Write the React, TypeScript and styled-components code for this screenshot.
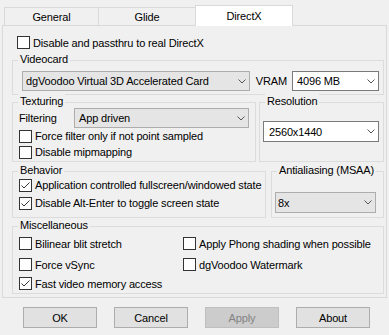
import React from 'react';
import styled, { createGlobalStyle } from 'styled-components';

const GlobalStyle = createGlobalStyle`
  html, body { margin: 0; padding: 0; background: #f0f0f0; }
  body {
    font-family: "Liberation Sans", Arial, sans-serif;
    font-size: 11px;
    letter-spacing: -0.15px;
    color: #000;
  }
  * { box-sizing: border-box; }
`;

const Dialog = styled.div`
  width: 389px;
  height: 335px;
  padding: 0 2px;
  background: #f0f0f0;
  display: flex;
  flex-direction: column;
`;

const TabBar = styled.div`
  display: flex;
  align-items: flex-end;
  height: 25px;
  padding-left: 2px;
`;

const Tab = styled.div<{ $active?: boolean; $w: number; $first?: boolean }>`
  position: relative;
  z-index: ${(p) => (p.$active ? 1 : 0)};
  width: ${(p) => p.$w}px;
  height: ${(p) => (p.$active ? 21 : 18)}px;
  margin-left: ${(p) => (p.$first ? 0 : -1)}px;
  margin-bottom: ${(p) => (p.$active ? -1 : 0)}px;
  border: 1px solid #d9d9d9;
  border-bottom: none;
  background: ${(p) => (p.$active ? '#ffffff' : '#f0f0f0')};
  display: flex;
  align-items: center;
  justify-content: center;
  padding-bottom: ${(p) => (p.$active ? 1 : 0)}px;
`;

const Panel = styled.div`
  height: 273px;
  border: 1px solid #d9d9d9;
  padding: 9px 2px 3px 9px;
  display: flex;
  flex-direction: column;
`;

const TopCheck = styled.div`
  padding-left: 5px;
`;

const Group = styled.div<{ $pad: string }>`
  position: relative;
  border: 1px solid #dcdcdc;
  padding: ${(p) => p.$pad};
`;

const GroupLabel = styled.span`
  position: absolute;
  top: -9px;
  left: 5px;
  padding: 0 2px;
  line-height: 15px;
  background: #f0f0f0;
  white-space: nowrap;
`;

const Spacer = styled.div<{ $h: number }>`
  height: ${(p) => p.$h}px;
  flex: none;
`;

const Row = styled.div`
  display: flex;
  align-items: center;
`;

const SplitRow = styled.div<{ $cols: string; $gap: number }>`
  display: grid;
  grid-template-columns: ${(p) => p.$cols};
  column-gap: ${(p) => p.$gap}px;
`;

const Combo = styled.div<{ $white?: boolean; $h?: number; $pl?: number; $grow?: boolean; $w?: number }>`
  height: ${(p) => p.$h ?? 20}px;
  ${(p) => (p.$grow ? 'flex: 1;' : '')}
  ${(p) => (p.$w ? `width: ${p.$w}px; flex: none;` : '')}
  display: flex;
  align-items: center;
  justify-content: space-between;
  border: 1px solid ${(p) => (p.$white ? '#7a7a7a' : '#adadad')};
  background: ${(p) => (p.$white ? '#ffffff' : '#e5e5e5')};
  padding: 0 3px 0 ${(p) => p.$pl ?? 3}px;
  white-space: nowrap;
`;

const FieldLabel = styled.span<{ $w?: number; $ml?: number; $mr?: number }>`
  ${(p) => (p.$w ? `width: ${p.$w}px;` : '')}
  margin-left: ${(p) => p.$ml ?? 0}px;
  margin-right: ${(p) => p.$mr ?? 0}px;
  flex: none;
  white-space: nowrap;
`;

const CheckRow = styled.label<{ $h: number }>`
  display: flex;
  align-items: center;
  gap: 3px;
  height: ${(p) => p.$h}px;
  white-space: nowrap;
`;

const Box = styled.span`
  width: 13px;
  height: 13px;
  flex: none;
  border: 1px solid #333333;
  background: #ffffff;
  display: flex;
  align-items: center;
  justify-content: center;
`;

const MiscGrid = styled.div`
  display: grid;
  grid-template-columns: 164px 1fr;
  grid-template-rows: 21px 21px 17px;
`;

const ButtonRow = styled.div`
  display: flex;
  gap: 17px;
  padding: 9px 0 0 21px;
`;

const Button = styled.button`
  width: 74px;
  height: 21px;
  padding: 0;
  font: inherit;
  letter-spacing: inherit;
  color: #000;
  background: #e1e1e1;
  border: 1px solid #adadad;
  &:disabled {
    color: #838383;
    background: #cccccc;
    border-color: #bfbfbf;
  }
`;

const Chevron = () => (
  <svg width="8" height="5" viewBox="0 0 8 5">
    <polyline points="0.5,0.5 4,4 7.5,0.5" fill="none" stroke="#555" strokeWidth="1" />
  </svg>
);

const Check = ({ label, checked, h = 15 }: { label: string; checked?: boolean; h?: number }) => (
  <CheckRow $h={h}>
    <Box>
      {checked && (
        <svg width="11" height="11" viewBox="0 0 11 11">
          <polyline points="1.5,5.5 4,8 9.5,2.5" fill="none" stroke="#333" strokeWidth="1" />
        </svg>
      )}
    </Box>
    <span>{label}</span>
  </CheckRow>
);

const Select = ({
  value,
  white,
  h,
  pl,
  grow,
  w,
}: {
  value: string;
  white?: boolean;
  h?: number;
  pl?: number;
  grow?: boolean;
  w?: number;
}) => (
  <Combo $white={white} $h={h} $pl={pl} $grow={grow} $w={w}>
    <span>{value}</span>
    <Chevron />
  </Combo>
);

export default function App() {
  return (
    <>
      <GlobalStyle />
      <Dialog>
        <TabBar>
          <Tab $w={95} $first>General</Tab>
          <Tab $w={98}>Glide</Tab>
          <Tab $w={98} $active>DirectX</Tab>
        </TabBar>
        <Panel>
          <TopCheck>
            <Check label="Disable and passthru to real DirectX" />
          </TopCheck>
          <Spacer $h={10} />
          <Group $pad="10px 4px 3px 9px">
            <GroupLabel>Videocard</GroupLabel>
            <Row>
              <Select value="dgVoodoo Virtual 3D Accelerated Card" grow />
              <FieldLabel $ml={6} $mr={5}>VRAM</FieldLabel>
              <Select value="4096 MB" white w={87} pl={4} />
            </Row>
          </Group>
          <Spacer $h={7} />
          <SplitRow $cols="244px 125px" $gap={3}>
            <Group $pad="5px 6px 1px 6px">
              <GroupLabel>Texturing</GroupLabel>
              <Row>
                <FieldLabel $w={55}>Filtering</FieldLabel>
                <Select value="App driven" grow pl={4} />
              </Row>
              <Check label="Force filter only if not point sampled" h={16} />
              <Check label="Disable mipmapping" h={16} />
            </Group>
            <Group $pad="18px 4px 0 3px">
              <GroupLabel>Resolution</GroupLabel>
              <Select value="2560x1440" white h={21} pl={5} />
            </Group>
          </SplitRow>
          <Spacer $h={9} />
          <SplitRow $cols="254px 113px" $gap={5}>
            <Group $pad="4px 0 5px 6px">
              <GroupLabel>Behavior</GroupLabel>
              <Check label="Application controlled fullscreen/windowed state" checked h={18} />
              <Check label="Disable Alt-Enter to toggle screen state" checked h={18} />
            </Group>
            <Group $pad="20px 7px 0 3px">
              <GroupLabel>Antialiasing (MSAA)</GroupLabel>
              <Select value="8x" h={21} pl={2} />
            </Group>
          </SplitRow>
          <Spacer $h={8} />
          <Group $pad="6px 0 1px 6px">
            <GroupLabel>Miscellaneous</GroupLabel>
            <MiscGrid>
              <Check label="Bilinear blit stretch" h={21} />
              <Check label="Apply Phong shading when possible" h={21} />
              <Check label="Force vSync" h={21} />
              <Check label="dgVoodoo Watermark" h={21} />
              <Check label="Fast video memory access" checked h={17} />
            </MiscGrid>
          </Group>
        </Panel>
        <ButtonRow>
          <Button>OK</Button>
          <Button>Cancel</Button>
          <Button disabled>Apply</Button>
          <Button>About</Button>
        </ButtonRow>
      </Dialog>
    </>
  );
}
